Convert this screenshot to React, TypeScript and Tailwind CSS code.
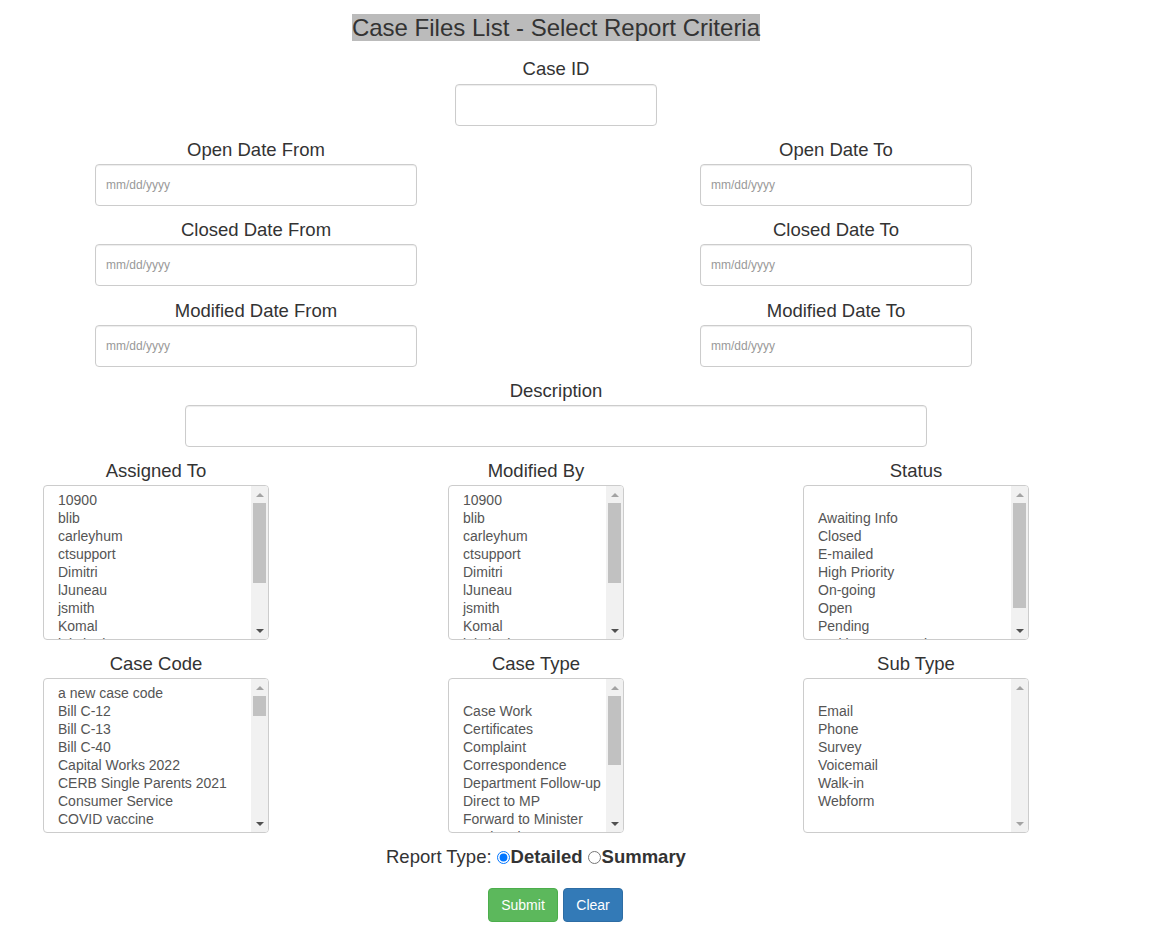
import React from "react";

type ListProps = {
  label: string;
  width: string;
  items: string[];
  thumb: number | null;
};

function Scrollbar({ thumb }: { thumb: number | null }) {
  const disabled = thumb === null;
  return (
    <div className="w-[17px] shrink-0 bg-[#f1f1f1] flex flex-col">
      <div className="h-[17px] flex items-center justify-center">
        <div className="w-0 h-0 border-x-[4px] border-x-transparent border-b-[4px] border-b-[#a3a3a3]" />
      </div>
      <div className="flex-1 flex flex-col">
        {thumb !== null && (
          <div className="mx-[2px] bg-[#c1c1c1]" style={{ height: thumb }} />
        )}
      </div>
      <div className="h-[17px] flex items-center justify-center">
        <div
          className={
            disabled
              ? "w-0 h-0 border-x-[4px] border-x-transparent border-t-[4px] border-t-[#a3a3a3]"
              : "w-0 h-0 border-x-[4px] border-x-transparent border-t-[4px] border-t-[#505050]"
          }
        />
      </div>
    </div>
  );
}

function ListBox({ label, width, items, thumb }: ListProps) {
  return (
    <div className={`${width} flex flex-col`}>
      <div className="text-[18.5px] leading-[20px] text-[#333] text-center whitespace-nowrap">{label}</div>
      <div className="h-[155px] mt-[4px] border border-[#ccc] rounded-[4px] bg-white flex overflow-hidden">
        <div className="flex-1 overflow-hidden pt-[5px] pl-[14px]">
          {items.map((it, i) => (
            <div key={i} className="h-[18px] leading-[18px] text-[14px] text-[#555] whitespace-nowrap">
              {it === "" ? "\u00a0" : it}
            </div>
          ))}
        </div>
        <Scrollbar thumb={thumb} />
      </div>
    </div>
  );
}

function DateField({ label, width }: { label: string; width: string }) {
  return (
    <div className={`${width} flex flex-col`}>
      <div className="text-[18.5px] leading-[20px] text-[#333] text-center whitespace-nowrap">{label}</div>
      <div className="mt-[4px] h-[42px] border border-[#ccc] rounded-[4px] shadow-[inset_0_1px_1px_rgba(0,0,0,0.075)] flex items-center pl-[10px]">
        <span className="text-[12px] text-[#999]">mm/dd/yyyy</span>
      </div>
    </div>
  );
}

function DateRow({ from, to, mt }: { from: string; to: string; mt: string }) {
  return (
    <div className={`${mt} flex pl-[95px] gap-[283px]`}>
      <DateField label={from} width="w-[322px]" />
      <DateField label={to} width="w-[272px]" />
    </div>
  );
}

export default function App() {
  return (
    <div className="w-[1152px] min-h-[930px] bg-white text-[#333] font-['Liberation_Sans',Arial,sans-serif]">
      <div className="w-[1112px] flex flex-col">
        <div className="mt-[14px] flex justify-center">
          <h1 className="bg-[#bbbbbb] text-[24px] leading-[27px] h-[27px] text-[#333] font-normal">
            Case Files List - Select Report Criteria
          </h1>
        </div>

        <div className="mt-[18px] ml-[455px] w-[202px] flex flex-col">
          <div className="text-[18.5px] leading-[20px] text-center">Case ID</div>
          <div className="mt-[5px] h-[42px] border border-[#ccc] rounded-[4px] shadow-[inset_0_1px_1px_rgba(0,0,0,0.075)]" />
        </div>

        <DateRow from="Open Date From" to="Open Date To" mt="mt-[14px]" />
        <DateRow from="Closed Date From" to="Closed Date To" mt="mt-[14px]" />
        <DateRow from="Modified Date From" to="Modified Date To" mt="mt-[15px]" />

        <div className="mt-[14px] ml-[185px] w-[742px] flex flex-col">
          <div className="text-[18.5px] leading-[20px] text-center">Description</div>
          <div className="mt-[4px] h-[42px] border border-[#ccc] rounded-[4px] shadow-[inset_0_1px_1px_rgba(0,0,0,0.075)]" />
        </div>

        <div className="mt-[14px] flex pl-[43px] gap-[179px]">
          <ListBox
            label="Assigned To"
            width="w-[226px]"
            thumb={80}
            items={["10900", "blib", "carleyhum", "ctsupport", "Dimitri", "lJuneau", "jsmith", "Komal", "lakshmi"]}
          />
          <ListBox
            label="Modified By"
            width="w-[176px]"
            thumb={80}
            items={["10900", "blib", "carleyhum", "ctsupport", "Dimitri", "lJuneau", "jsmith", "Komal", "lakshmi"]}
          />
          <ListBox
            label="Status"
            width="w-[226px]"
            thumb={105}
            items={["", "Awaiting Info", "Closed", "E-mailed", "High Priority", "On-going", "Open", "Pending", "Waiting on Constituent"]}
          />
        </div>

        <div className="mt-[14px] flex pl-[43px] gap-[179px]">
          <ListBox
            label="Case Code"
            width="w-[226px]"
            thumb={20}
            items={["a new case code", "Bill C-12", "Bill C-13", "Bill C-40", "Capital Works 2022", "CERB Single Parents 2021", "Consumer Service", "COVID vaccine", "CEP 2019"]}
          />
          <ListBox
            label="Case Type"
            width="w-[176px]"
            thumb={69}
            items={["", "Case Work", "Certificates", "Complaint", "Correspondence", "Department Follow-up", "Direct to MP", "Forward to Minister", "Immigration"]}
          />
          <ListBox
            label="Sub Type"
            width="w-[226px]"
            thumb={null}
            items={["", "Email", "Phone", "Survey", "Voicemail", "Walk-in", "Webform"]}
          />
        </div>

        <div className="mt-[14px] ml-[386px] flex items-center text-[18.5px] leading-[20px] text-[#333] whitespace-nowrap">
          <span>Report Type:</span>
          <input type="radio" name="rt" defaultChecked className="ml-[5px] mr-[1px] w-[13px] h-[13px] m-0" />
          <b className="font-bold">Detailed</b>
          <input type="radio" name="rt" className="ml-[5px] mr-[1px] w-[13px] h-[13px] m-0" />
          <b className="font-bold">Summary</b>
        </div>

        <div className="mt-[21px] ml-[488px] flex gap-[5px]">
          <button className="w-[70px] h-[34px] rounded-[4px] bg-[#5cb85c] border border-[#4cae4c] text-white text-[14px]">
            Submit
          </button>
          <button className="w-[60px] h-[34px] rounded-[4px] bg-[#337ab7] border border-[#2e6da4] text-white text-[14px]">
            Clear
          </button>
        </div>
      </div>
    </div>
  );
}
